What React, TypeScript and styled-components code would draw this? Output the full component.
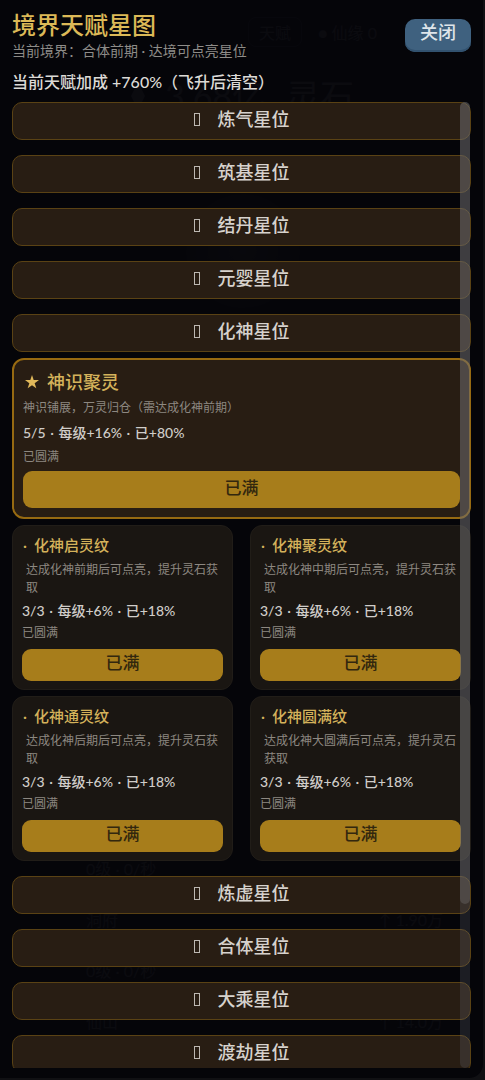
import React from "react";
import styled, { createGlobalStyle, css } from "styled-components";

const GlobalStyle = createGlobalStyle`
  *, *::before, *::after { box-sizing: border-box; }
  body {
    margin: 0;
    background: #101013;
    color: #dcdad6;
    font-family: Lato, "Noto Sans CJK SC", sans-serif;
    overflow: hidden;
  }
  h1, h2, h3, p { margin: 0; font-weight: 400; }
  button { font-family: inherit; border: 0; cursor: pointer; }
`;

const Stage = styled.div`
  display: grid;
  grid-template: 100vh / 100%;
`;

/* The game screen that stays dimly visible behind the panel */
const Backdrop = styled.div`
  grid-area: 1 / 1;
  display: flex;
  flex-direction: column;
  align-items: center;
  padding: 16px 20px 46px;
  color: #ffffff;
  opacity: 0.12;
`;

const BackdropBar = styled.div`
  display: flex;
  align-self: flex-end;
  align-items: center;
  gap: 16px;
  height: 32px;
  margin-right: 88px;
  font-size: 16px;
`;

const BackdropTab = styled.span`
  padding: 2px 10px;
  border: 1px solid #777777;
  border-radius: 8px;
`;

const BackdropTotal = styled.p`
  display: flex;
  align-items: center;
  gap: 20px;
  margin-top: 24px;
  font-size: 34px;
  line-height: 48px;
`;

const BackdropOrb = styled.div`
  width: 114px;
  height: 114px;
  margin-top: 74px;
  border-radius: 50%;
  background: radial-gradient(circle, #999999 0, #555555 45%, #333333 70%);
`;

const BackdropList = styled.div`
  display: flex;
  flex-direction: column;
  gap: 27px;
  width: 100%;
  margin-top: auto;
  padding: 0 22px 0 66px;
  font-size: 16px;
  line-height: 24px;
`;

const BackdropRow = styled.div`
  display: flex;
  justify-content: space-between;
`;

const Panel = styled.main`
  grid-area: 1 / 1;
  display: flex;
  flex-direction: column;
  min-width: 0;
  margin: 0 2px 2px 0;
  padding: 8px 12px 10px 12px;
  border-radius: 0 0 14px 0;
  background: rgba(3, 3, 8, 0.8);
  z-index: 1;
`;

const Header = styled.header`
  display: flex;
  justify-content: space-between;
  align-items: center;
  height: 54px;
`;

const Title = styled.h1`
  font-size: 24px;
  line-height: 32px;
  font-weight: 500;
  color: #dcb957;
`;

const Subtitle = styled.p`
  font-size: 14px;
  line-height: 20px;
  color: #8e8c88;
`;

const CloseButton = styled.button`
  width: 66px;
  height: 33px;
  padding: 0 0 6px;
  border-radius: 10px;
  background: #3f617f;
  box-shadow: inset 0 -2px 0 #32526f;
  color: #dfe5ea;
  font-size: 18px;
  font-weight: 500;
  line-height: 24px;
`;

const Bonus = styled.p`
  font-size: 16px;
  line-height: 24px;
  padding: 8px 0;
  font-weight: 500;
`;

const Viewport = styled.div`
  position: relative;
  flex: 1;
  min-height: 0;
  overflow: hidden;
`;

const Sections = styled.div`
  display: flex;
  flex-direction: column;
  gap: 15px;
`;

const Section = styled.section`
  display: flex;
  flex-direction: column;
  gap: 6px;
`;

const RealmButton = styled.button`
  display: flex;
  align-items: center;
  justify-content: center;
  gap: 18px;
  height: 38px;
  padding: 0 0 4px;
  border: 1px solid #5a4214;
  border-radius: 10px;
  background: #281d13;
  color: #d6d2cd;
  font-size: 18px;
  font-weight: 500;
  line-height: 26px;
`;

const Marker = styled.span`
  width: 6px;
  height: 13px;
  border: 1px solid #bdb8b2;
`;

const NodeGrid = styled.div`
  display: grid;
  grid-template-columns: 1fr 1fr;
  gap: 6px 17px;
`;

const NodeName = styled.h3`
  display: flex;
  align-items: center;
  font-size: 15px;
  font-weight: 500;
  line-height: 24px;
  color: #d4b25b;
`;

const Bullet = styled.span`
  width: 12px;
  padding-left: 1px;
`;

const Star = styled.svg`
  width: 14px;
  height: 14px;
  margin: 0 8px 0 2px;
  fill: #e0b85a;
`;

const Note = styled.p`
  font-size: 12px;
  line-height: 18px;
  color: #8d8881;
`;

const Description = styled(Note)`
  margin: 4px 0 2px 4px;
`;

const Level = styled.p`
  margin-bottom: 1px;
  font-size: 14px;
  font-weight: 500;
  line-height: 24px;
  color: #d0cdc9;
`;

const Separator = styled.span`
  margin: 0 1px;
  white-space: pre;
`;

const NodeButton = styled.button`
  height: 32px;
  padding: 0 0 4px;
  margin-top: 7px;
  border-radius: 9px;
  background: #a77d1b;
  color: #32270e;
  font-size: 17px;
  font-weight: 500;
  line-height: 24px;
`;

const Card = styled.article<{ $core?: boolean }>`
  display: flex;
  flex-direction: column;
  border-radius: 12px;
  ${(p) =>
    p.$core
      ? css`
          grid-column: 1 / -1;
          padding: 10px 9px 9px;
          border: 2px solid #976a11;
          background: #281d13;
          ${NodeName} {
            font-size: 18px;
          }
          ${Description} {
            margin: 5px 0 4px;
          }
          ${Level} {
            margin-bottom: 3px;
          }
          ${NodeButton} {
            height: 37px;
            margin-top: 5px;
          }
        `
      : css`
          padding: 7px 9px 8px;
          border: 1px solid #211d18;
          background: #1a1612;
        `}
`;

const Track = styled.div`
  position: absolute;
  top: 0;
  right: 1px;
  bottom: 0;
  width: 10px;
  border-radius: 5px;
  background: rgba(120, 125, 140, 0.2);
`;

const Thumb = styled.div`
  height: 83%;
  border-radius: 5px;
  background: rgba(110, 108, 106, 0.42);
`;

type TalentNode = { name: string; desc: string; level: string[]; core?: boolean };
type Realm = { name: string; nodes?: TalentNode[] };

const minorLevel = ["3/3", "每级+6%", "已+18%"];

const realms: Realm[] = [
  { name: "炼气" },
  { name: "筑基" },
  { name: "结丹" },
  { name: "元婴" },
  {
    name: "化神",
    nodes: [
      {
        name: "神识聚灵",
        desc: "神识铺展，万灵归仓（需达成化神前期）",
        level: ["5/5", "每级+16%", "已+80%"],
        core: true,
      },
      { name: "化神启灵纹", desc: "达成化神前期后可点亮，提升灵石获取", level: minorLevel },
      { name: "化神聚灵纹", desc: "达成化神中期后可点亮，提升灵石获取", level: minorLevel },
      { name: "化神通灵纹", desc: "达成化神后期后可点亮，提升灵石获取", level: minorLevel },
      { name: "化神圆满纹", desc: "达成化神大圆满后可点亮，提升灵石获取", level: minorLevel },
    ],
  },
  { name: "炼虚" },
  { name: "合体" },
  { name: "大乘" },
  { name: "渡劫" },
];

function NodeCard({ node }: { node: TalentNode }) {
  return (
    <Card $core={node.core}>
      <NodeName>
        {node.core ? (
          <Star viewBox="0 0 20 20" aria-hidden="true">
            <path d="M10 0l2.4 7.3H20l-6.200 4.500 2.400 7.300L10 14.600l-6.200 4.500 2.400-7.300L0 7.300h7.600z" />
          </Star>
        ) : (
          <Bullet>·</Bullet>
        )}
        {node.name}
      </NodeName>
      <Description>{node.desc}</Description>
      <Level>
        {node.level.map((part, i) => (
          <React.Fragment key={part}>
            {i > 0 && <Separator> · </Separator>}
            {part}
          </React.Fragment>
        ))}
      </Level>
      <Note>已圆满</Note>
      <NodeButton type="button">已满</NodeButton>
    </Card>
  );
}

export default function App() {
  return (
    <>
      <GlobalStyle />
      <Stage>
        <Backdrop aria-hidden="true">
          <BackdropBar>
            <BackdropTab>天赋</BackdropTab>
            <span>● 仙缘 0</span>
          </BackdropBar>
          <BackdropTotal>
            <svg width="14" height="28" viewBox="0 0 14 28">
              <path d="M7 0l7 14-7 14L0 14z" fill="currentColor" />
            </svg>
            <span>3.68亿</span>
            <span>灵石</span>
          </BackdropTotal>
          <BackdropOrb />
          <BackdropList>
            <BackdropRow>
              <span>0级 · 0/秒</span>
            </BackdropRow>
            <BackdropRow>
              <span>洞府</span>
              <span>↑ 1.90万</span>
            </BackdropRow>
            <BackdropRow>
              <span>0级 · 0/秒</span>
            </BackdropRow>
            <BackdropRow>
              <span>仙山</span>
              <span>↑ 14.0万</span>
            </BackdropRow>
          </BackdropList>
        </Backdrop>
        <Panel>
          <Header>
            <div>
              <Title>境界天赋星图</Title>
              <Subtitle>当前境界：合体前期 · 达境可点亮星位</Subtitle>
            </div>
            <CloseButton type="button">关闭</CloseButton>
          </Header>
          <Bonus>当前天赋加成 +760%（飞升后清空）</Bonus>
          <Viewport>
            <Sections>
              {realms.map((realm) => (
                <Section key={realm.name}>
                  <RealmButton type="button" aria-expanded={Boolean(realm.nodes)}>
                    <Marker aria-hidden="true" />
                    {realm.name}星位
                  </RealmButton>
                  {realm.nodes && (
                    <NodeGrid>
                      {realm.nodes.map((node) => (
                        <NodeCard key={node.name} node={node} />
                      ))}
                    </NodeGrid>
                  )}
                </Section>
              ))}
            </Sections>
            <Track>
              <Thumb />
            </Track>
          </Viewport>
        </Panel>
      </Stage>
    </>
  );
}
